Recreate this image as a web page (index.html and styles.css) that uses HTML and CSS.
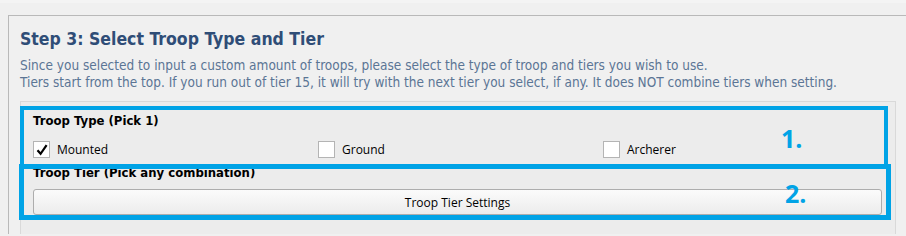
FILE: index.html
```html
<!DOCTYPE html>
<html>
<head>
<meta charset="utf-8">
<link rel="stylesheet" href="styles.css">
</head>
<body>
<div class="topband"></div>
<div class="outer">
  <h1 class="title">Step 3: Select Troop Type and Tier</h1>
  <p class="desc">Since you selected to input a custom amount of troops, please select the type of troop and tiers you wish to use.<br>Tiers start from the top. If you run out of tier 15, it will try with the next tier you select, if any. It does NOT combine tiers when setting.</p>
  <div class="inner">
    <div class="label">Troop Type (Pick 1)</div>
    <div class="checks">
      <label class="check"><span class="box"><svg width="14" height="14" viewBox="0 0 14 14"><path d="M2.5 7.2 L5.6 10.8 L11.6 2.2" fill="none" stroke="#000" stroke-width="2.2" stroke-linejoin="miter"/></svg></span>Mounted</label>
      <label class="check"><span class="box"></span>Ground</label>
      <label class="check"><span class="box"></span>Archerer</label>
    </div>
    <div class="label tier">Troop Tier (Pick any combination)</div>
    <button class="btn">Troop Tier Settings</button>
    <div class="mark mark1"></div>
    <div class="mark mark2"></div>
    <span class="num num1">1.</span>
    <span class="num num2">2.</span>
  </div>
</div>
</body>
</html>
```
FILE: styles.css
```css
html, body {
  margin: 0;
  padding: 0;
  background: #f0f0f0;
  height: 236px;
  overflow: hidden;
}
.topband {
  height: 3px;
  background: #f4f4f4;
}
.outer {
  margin: 12px 0 0 8px;
  border-top: 1px solid #b9b9b9;
  border-left: 1px solid #b9b9b9;
  padding: 12px 10px 0 11px;
  height: 206px;
  overflow: hidden;
}
.title {
  margin: 0;
  font-family: "DejaVu Sans Condensed", "DejaVu Sans", sans-serif;
  font-weight: bold;
  font-size: 17.5px;
  line-height: 22px;
  color: #2f4d77;
}
.desc {
  margin: 7px 0 0 0;
  font-family: "DejaVu Sans Condensed", "DejaVu Sans", sans-serif;
  font-size: 13.5px;
  line-height: 17px;
  color: #5b7595;
}
.inner {
  position: relative;
  margin-top: 10px;
  border: 1px solid #d9d9d9;
  background: #ececec;
  padding: 12px 12px 0 12px;
  height: 142px;
}
.label {
  font-family: "DejaVu Sans", sans-serif;
  font-weight: bold;
  font-size: 11.7px;
  line-height: 15px;
  color: #000;
}
.checks {
  display: grid;
  grid-template-columns: 285px 285px 1fr;
  margin-top: 12px;
  height: 16px;
}
.check {
  display: flex;
  align-items: center;
  gap: 7px;
  font-family: "Open Sans", sans-serif;
  font-size: 12px;
  color: #000;
}
.box {
  width: 15px;
  height: 15px;
  border: 1px solid #b4b4b4;
  background: #fff;
  display: flex;
  align-items: center;
  justify-content: center;
}
.tier {
  margin-top: 9px;
}
.btn {
  display: block;
  margin-top: 8px;
  width: 849px;
  height: 26px;
  border: 1px solid #adadad;
  border-radius: 3px;
  background: linear-gradient(#fbfbfb, #ececec);
  font-family: "Open Sans", sans-serif;
  font-size: 12px;
  color: #000;
  padding: 0;
}
.mark {
  position: absolute;
  border-style: solid;
  border-color: #00a3e6;
}
.mark1 {
  left: -1px;
  top: 4px;
  width: 860px;
  height: 54px;
  border-width: 4px;
}
.mark2 {
  left: -2px;
  top: 62px;
  width: 862px;
  height: 46px;
  border-width: 5px;
}
.num {
  position: absolute;
  font-family: "Open Sans", sans-serif;
  font-weight: bold;
  font-size: 25px;
  line-height: 30px;
  color: #00a3e6;
}
.num1 {
  left: 760px;
  top: 21px;
}
.num2 {
  left: 764px;
  top: 76px;
}
```
